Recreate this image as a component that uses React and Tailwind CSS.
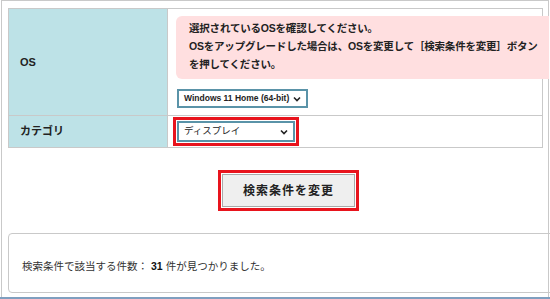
import React from 'react';

const font = { fontFamily: '"Liberation Sans", "Noto Sans CJK JP", sans-serif' };

const Chevron = () => (
    <svg width="8" height="6" viewBox="0 0 8 6" className="shrink-0">
        <path d="M1 1.5 L4 4.5 L7 1.5" fill="none" stroke="#222" strokeWidth="1.6" />
    </svg>
);

const FakeSelect = ({ label, className }) => (
    <div className={`flex items-center justify-between border-2 border-[#5a93a8] bg-white pl-[5px] pr-[5px] text-[#222] ${className}`}>
        <span className="whitespace-nowrap">{label}</span>
        <Chevron />
    </div>
);

export default function App() {
    return (
        <div className="w-[550px] h-[299px] overflow-hidden bg-white text-[#222]" style={font}>
            <div className="ml-[1px] w-[548px] h-[297px] border-t border-l border-r border-[#c9c9c9] pt-[7px] pl-[6px] flex flex-col">
                {/* search table */}
                <div className="w-[535px] border border-[#c9c9c9]">
                    <div className="grid grid-cols-[159px_1fr] border-b border-[#c9c9c9] h-[107px]">
                        <div className="bg-[#bde2e7] border-r border-[#c9c9c9] flex items-center pl-[11px] text-[11px] font-bold">
                            OS
                        </div>
                        <div className="pl-[8px] pt-[7px]">
                            <div className="mr-[-7px] rounded-l-[6px] bg-[#ffdfe0] pl-[13px] pt-[3px] pb-[6px] text-[10.5px] font-bold leading-[18px] tracking-[-0.2px] whitespace-nowrap">
                                選択されているOSを確認してください。<br />
                                OSをアップグレードした場合は、OSを変更して［検索条件を変更］ボタン<br />
                                を押してください。
                            </div>
                            <FakeSelect
                                label="Windows 11 Home (64-bit)"
                                className="mt-[10px] ml-[1px] w-[131px] h-[19px] text-[8.5px] font-bold"
                            />
                        </div>
                    </div>
                    <div className="grid grid-cols-[159px_1fr] h-[31px]">
                        <div className="bg-[#bde2e7] border-r border-[#c9c9c9] flex items-center pl-[11px] text-[11px] font-bold">
                            カテゴリ
                        </div>
                        <div className="pl-[5px] pt-[1px]">
                            <div className="w-[126px] h-[29px] border-[3px] border-[#e8141d] p-[1px]">
                                <FakeSelect label="ディスプレイ" className="h-[21px] text-[9.5px]" />
                            </div>
                        </div>
                    </div>
                </div>

                {/* submit */}
                <div className="h-[85px] pl-[210px] pt-[22px]">
                    <div className="w-[141px] h-[41px] border-[3px] border-[#e8141d] p-[1px]">
                        <button
                            type="button"
                            className="w-full h-full bg-[#efefef] border border-[#a9a9a9] text-[12px] font-bold tracking-[1px] text-[#222]"
                        >
                            検索条件を変更
                        </button>
                    </div>
                </div>

                {/* result */}
                <div className="w-[550px] h-[60px] border border-[#c9c9c9] rounded-tl-[4px] rounded-bl-[4px] flex items-center pl-[13px] pt-[7px] text-[10.5px] text-[#333]">
                    検索条件で該当する件数：
                    <span className="font-bold text-[#111] ml-[3px] mr-[3px]">31</span>
                    件が見つかりました。
                </div>
            </div>
            <div className="h-[2px] bg-[#7f9fbf]" />
        </div>
    );
}
